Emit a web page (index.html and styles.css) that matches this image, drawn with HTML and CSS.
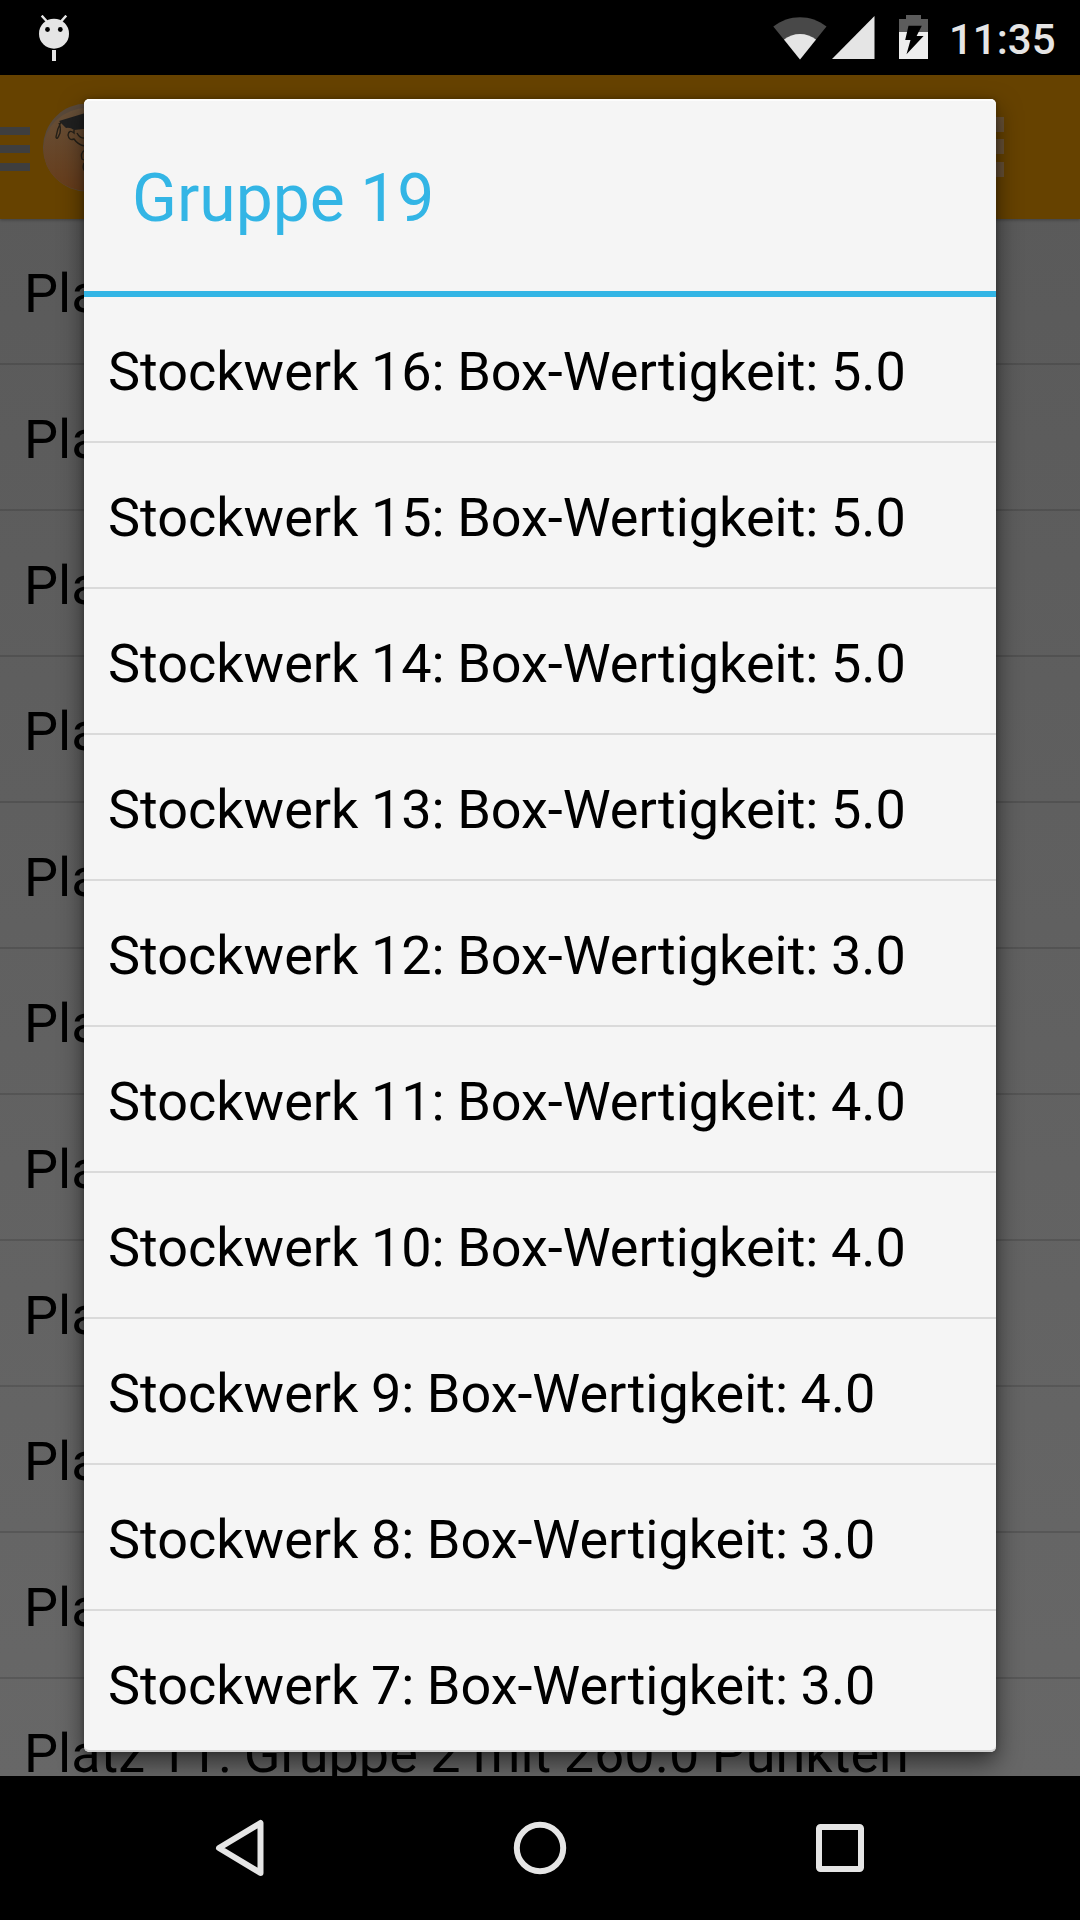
FILE: index.html
```html
<!DOCTYPE html>
<html lang="de">
<head>
<meta charset="utf-8">
<title>Gruppe 19</title>
<link rel="stylesheet" href="styles.css">
</head>
<body>
<header class="status">
  <svg class="debug" viewBox="0 0 34 48" width="34" height="48"><g fill="#e5e5e5"><circle cx="17" cy="18.700" r="15"/><path d="M15 35h4v11h-4z"/></g><path d="M5.500 1.500 9.500 6M28.500 1.500 24.500 6" stroke="#e5e5e5" stroke-width="2.400" stroke-linecap="square"/><circle cx="10.500" cy="14.500" r="2.400"/><circle cx="23.300" cy="14.500" r="2.400"/></svg>
  <div class="indicators">
    <svg class="wifi" viewBox="0 0 54 44" width="54" height="44"><path d="M.3 10.500C16-2 38-2 53.500 10.500L27 43.500z" fill="#484848"/><path d="M11 23.500C20 16 34 16 43 23.500L27 43.500z" fill="#e5e5e5"/></svg>
    <svg class="signal" viewBox="0 0 43 43" width="43" height="43"><path d="M0 43 42.500 0V43z" fill="#e5e5e5"/></svg>
    <svg class="battery" viewBox="0 0 29 44" width="29" height="44"><path d="M0 17V4h7V0h15v4h7v13z" fill="#5c5c5c"/><path d="M0 17h29v27H0z" fill="#eee"/><path d="M9.500 10.700H22.800L17.600 21h7L7.500 39.300 11.500 25H6.200z"/></svg>
    <span class="clock">11:35</span>
  </div>
</header>
<main class="app">
  <div class="actionbar">
    <svg class="menu" viewBox="0 0 30 44" width="30" height="44"><path d="M0 0h30v8H0zM0 18h30v8H0zM0 36h30v8H0z" fill="#3e3e3e"/></svg>
    <svg class="avatar" viewBox="0 0 88 90" width="88" height="90">
      <defs><linearGradient id="skin" x1="0" y1="0" x2="0" y2="1"><stop offset="0" stop-color="#665039"/><stop offset="1" stop-color="#673c1a"/></linearGradient></defs>
      <circle cx="44" cy="44.500" r="44" fill="#59493a"/><ellipse cx="44" cy="46.500" rx="43.500" ry="41.500" fill="url(#skin)"/>
      <path d="M16 18 44 9.500 72 18 60 26Q44 25 31 27Q27 24 23 25z" fill="#202020"/>
      <path d="M18 19Q14 26 13 34Q14 38 17 30Q18 24 16 20M31 27V30Q26 26 25 32Q26 38 31 36Q35 42 42 43M34 30Q37 36 43 35M42 47Q37 50 39 56Q42 58 44 56M41 60Q39 66 42 68" fill="none" stroke="#252018" stroke-width="1.400"/>
    </svg>
    <svg class="overflow" viewBox="0 0 15 60" width="15" height="60"><path d="M0 0h15v15H0zM0 22h15v15H0zM0 45h15v15H0z" fill="#665035"/></svg>
  </div>
  <ul class="list ranking">
    <li>Platz 1:</li><li>Platz 2:</li><li>Platz 3:</li><li>Platz 4:</li><li>Platz 5:</li><li>Platz 6:</li><li>Platz 7:</li><li>Platz 8:</li><li>Platz 9:</li><li>Platz 10:</li><li>Platz 11: Gruppe 2 mit 260.0 Punkten</li>
  </ul>
  <section class="dialog">
    <h1>Gruppe 19</h1>
    <ul class="list">
      <li>Stockwerk 16: Box-Wertigkeit: 5.0</li>
      <li>Stockwerk 15: Box-Wertigkeit: 5.0</li>
      <li>Stockwerk 14: Box-Wertigkeit: 5.0</li>
      <li>Stockwerk 13: Box-Wertigkeit: 5.0</li>
      <li>Stockwerk 12: Box-Wertigkeit: 3.0</li>
      <li>Stockwerk 11: Box-Wertigkeit: 4.0</li>
      <li>Stockwerk 10: Box-Wertigkeit: 4.0</li>
      <li>Stockwerk 9: Box-Wertigkeit: 4.0</li>
      <li>Stockwerk 8: Box-Wertigkeit: 3.0</li>
      <li>Stockwerk 7: Box-Wertigkeit: 3.0</li>
    </ul>
  </section>
</main>
<nav class="navbar">
  <svg viewBox="0 0 60 60" width="60" height="60"><path d="M50.500 5V55L9 30z" fill="none" stroke="#e5e5e5" stroke-width="6" stroke-linejoin="round"/></svg>
  <svg viewBox="0 0 60 60" width="60" height="60"><circle cx="30" cy="30" r="23.200" fill="none" stroke="#e5e5e5" stroke-width="6"/></svg>
  <svg viewBox="0 0 60 60" width="60" height="60"><rect x="9" y="9" width="42" height="42" rx="1.500" fill="none" stroke="#e5e5e5" stroke-width="6"/></svg>
</nav>
</body>
</html>
```
FILE: styles.css
```css
* { box-sizing: border-box; }
body {
  margin: 0;
  width: 1080px;
  height: 1920px;
  display: flex;
  flex-direction: column;
  overflow: hidden;
  background: #000;
  color: #000;
  font-family: Roboto, sans-serif;
}
svg { display: block; flex: none; }
.status {
  height: 75px;
  flex: none;
  display: flex;
  justify-content: space-between;
  align-items: flex-start;
  padding: 15px 24.5px 0 37px;
}
.indicators { display: flex; align-items: flex-start; }
.signal { margin: 1px 0 0 5px; }
.wifi { margin-top: 1px; }
.battery { margin-left: 24px; }
.clock {
  margin-left: 21px;
  color: #e5e5e5;
  font-size: 42px;
  font-weight: 500;
  line-height: 50px;
}
.app {
  position: relative;
  height: 1701px;
  flex: none;
  overflow: hidden;
  background: linear-gradient(#595959, #676767);
}
.actionbar {
  height: 144px;
  display: flex;
  align-items: center;
  background: #664200;
  box-shadow: 0 1px 3px rgba(0, 0, 0, .3);
}
.menu { margin-top: 4px; }
.avatar { margin: 2px 0 0 13px; }
.overflow { margin: 0 76px 0 auto; }
.list {
  list-style: none;
  margin: 0;
  padding: 0;
}
.list li {
  height: 146px;
  padding: 5px 24px 0;
  border-bottom: 2px solid #dadada;
  font-size: 54px;
  line-height: 139px;
  letter-spacing: -.01px;
  word-spacing: -.9px;
  white-space: nowrap;
}
.ranking li { border-color: rgba(0, 0, 0, .13); }
.dialog {
  position: absolute;
  top: 24px;
  left: 84px;
  width: 912px;
  height: 1653px;
  overflow: hidden;
  border-radius: 5px;
  background: #f5f5f5;
  box-shadow: 0 10px 24px rgba(0, 0, 0, .55), 0 0 5px rgba(0, 0, 0, .25);
}
.dialog h1 {
  height: 198px;
  margin: 0;
  padding: 7px 48px 0;
  border-bottom: 6px solid #33b5e5;
  color: #33b5e5;
  font-size: 66px;
  font-weight: 400;
  line-height: 186px;
  word-spacing: -1px;
}
.dialog::after {
  content: "";
  position: absolute;
  inset: 0;
  border-radius: 5px;
  box-shadow: inset 0 2px #fcfcfc, inset 0 -2px #d2d2d2;
}
.dialog .list li:last-child { border: 0; }
.navbar {
  height: 144px;
  flex: none;
  display: flex;
  justify-content: center;
  align-items: center;
  gap: 240px;
}
```
